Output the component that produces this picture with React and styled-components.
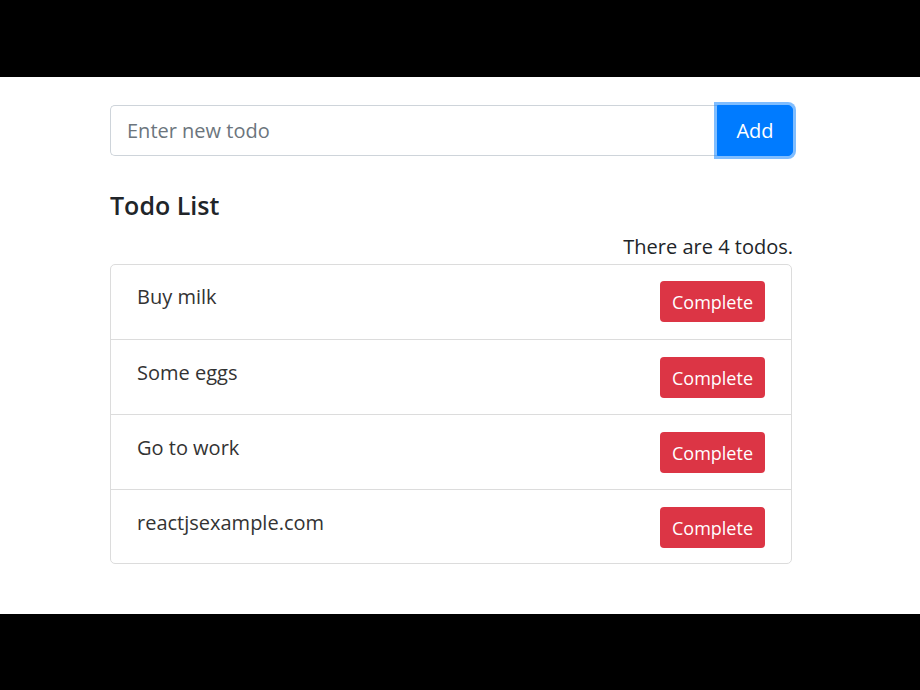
import styled, { createGlobalStyle } from "styled-components";
import { useState } from "react";

const GlobalStyle = createGlobalStyle`
  html, body {
    margin: 0;
    padding: 0;
    background: #000;
  }
  body {
    font-family: "Open Sans", "Noto Sans", sans-serif;
    color: #212529;
  }
`;

const App = () => {
  const [todos, setTodos] = useState([
    "Buy milk",
    "Some eggs",
    "Go to work",
    "reactjsexample.com",
  ]);
  const [value, setValue] = useState("");

  const addTodo = () => {
    if (!value.trim()) return;
    setTodos([...todos, value]);
    setValue("");
  };

  return (
    <Frame>
      <GlobalStyle />
      <Bar />
      <Page>
        <Container>
          <InputGroup>
            <Input
              type="text"
              placeholder="Enter new todo"
              value={value}
              onChange={(e) => setValue(e.target.value)}
              onKeyDown={(e) => {
                if (e.key === "Enter") addTodo();
              }}
            />
            <AddButton onClick={addTodo}>Add</AddButton>
          </InputGroup>
          <Heading>Todo List</Heading>
          <Count>There are {todos.length} todos.</Count>
          <List>
            {todos.map((todo, i) => (
              <Row key={i}>
                <Label>{todo}</Label>
                <CompleteButton
                  onClick={() => setTodos(todos.filter((_, j) => j !== i))}
                >
                  Complete
                </CompleteButton>
              </Row>
            ))}
          </List>
        </Container>
      </Page>
      <Bar $bottom />
    </Frame>
  );
};

const Frame = styled.div`
  display: flex;
  flex-direction: column;
  width: 920px;
  height: 690px;
  background: #000;
`;

const Bar = styled.div`
  height: ${(p) => (p.$bottom ? "76px" : "77px")};
  background: #000;
  flex-shrink: 0;
`;

const Page = styled.div`
  flex: 1;
  background: #fff;
  padding: 28px 127px 0 110px;
`;

const Container = styled.div`
  display: flex;
  flex-direction: column;
`;

const InputGroup = styled.div`
  display: flex;
  height: 51px;
`;

const Input = styled.input`
  flex: 1;
  min-width: 0;
  box-sizing: border-box;
  height: 51px;
  border: 1.5px solid #ced4da;
  border-right: none;
  border-radius: 5px 0 0 5px;
  padding: 0 16px;
  font-family: inherit;
  font-size: 20px;
  color: #495057;

  &::placeholder {
    color: #6c757d;
  }

  &:focus {
    outline: none;
  }
`;

const AddButton = styled.button`
  box-sizing: border-box;
  width: 76px;
  height: 51px;
  border: 1.5px solid #007bff;
  border-radius: 0 5px 5px 0;
  background: #007bff;
  color: #fff;
  font-family: inherit;
  font-size: 20px;
  box-shadow: 0 0 0 3px rgba(0, 123, 255, 0.5);
  cursor: pointer;
`;

const Heading = styled.h5`
  margin: 33px 0 0;
  font-size: 25px;
  font-weight: 600;
  line-height: 32px;
  color: #212529;
`;

const Count = styled.div`
  margin-top: 10px;
  text-align: right;
  font-size: 20px;
  line-height: 32px;
  color: #212529;
`;

const List = styled.ul`
  list-style: none;
  margin: 1px 1px 0 0;
  padding: 0;
  border: 1px solid #dcdcdc;
  border-radius: 5px;
`;

const Row = styled.li`
  display: flex;
  align-items: flex-start;
  justify-content: space-between;
  box-sizing: border-box;
  height: 74px;
  padding: 16px 26px 0 26px;

  & + & {
    height: 75px;
    padding-top: 17px;
    border-top: 1px solid #dcdcdc;
  }

  &:last-child {
    height: 74px;
  }
`;

const Label = styled.span`
  font-size: 20px;
  line-height: 32px;
  color: #333;
`;

const CompleteButton = styled.button`
  box-sizing: border-box;
  width: 105px;
  height: 41px;
  border: none;
  border-radius: 4px;
  background: #dc3545;
  color: #fff;
  font-family: inherit;
  font-size: 18px;
  cursor: pointer;
`;

export default App;
